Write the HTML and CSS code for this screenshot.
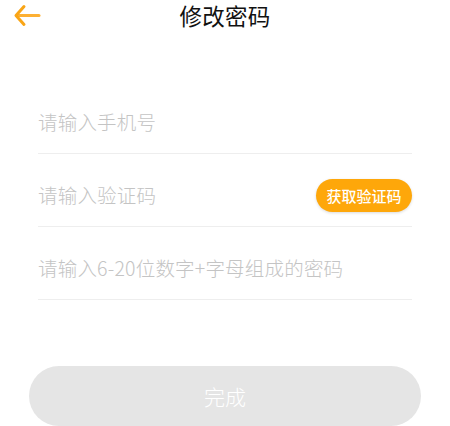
FILE: index.html
```html
<!DOCTYPE html>
<html lang="zh-CN">
<head>
<meta charset="utf-8">
<title>修改密码</title>
<link rel="stylesheet" href="styles.css">
</head>
<body>
<div class="page">
  <header class="header">
    <span class="back" aria-label="返回">
      <svg width="30" height="26" viewBox="0 0 30 26" fill="none">
        <path d="M5 12.5 H27" stroke="#FDB033" stroke-width="3" stroke-linecap="round"/>
        <path d="M12 3.5 L4 12.5 L12 21.5" stroke="#F9A516" stroke-width="3" stroke-linecap="round" stroke-linejoin="round"/>
      </svg>
    </span>
    <h1 class="title">修改密码</h1>
  </header>
  <main class="form">
    <div class="row"><span class="placeholder">请输入手机号</span></div>
    <div class="row">
      <span class="placeholder">请输入验证码</span>
      <button class="code-btn">获取验证码</button>
    </div>
    <div class="row"><span class="placeholder">请输入6-20位数字+字母组成的密码</span></div>
  </main>
  <div class="submit-wrap">
    <button class="submit">完成</button>
  </div>
</div>
</body>
</html>
```
FILE: styles.css
```css
* { box-sizing: border-box; }
html, body {
  margin: 0;
  padding: 0;
  background: #ffffff;
  font-family: "Noto Sans CJK SC", "Noto Sans", sans-serif;
}
.page {
  width: 450px;
  height: 426px;
  overflow: hidden;
}
.header {
  position: relative;
  height: 30px;
  display: flex;
  align-items: center;
  justify-content: center;
}
.back {
  position: absolute;
  left: 12px;
  top: 3px;
  width: 30px;
  height: 26px;
  display: block;
}
.back svg { display: block; }
.title {
  margin: 0;
  font-size: 22.5px;
  font-weight: 400;
  color: #111111;
  line-height: 30px;
  letter-spacing: 0.3px;
}
.form {
  padding: 51px 38px 0;
}
.row {
  height: 73px;
  padding: 24px 0 14px;
  border-bottom: 1px solid #eeeeee;
  display: flex;
  align-items: center;
  justify-content: space-between;
}
.placeholder {
  font-size: 19.5px;
  font-weight: 300;
  color: #c4c4c4;
  line-height: 34px;
  letter-spacing: 0.2px;
}
.code-btn {
  height: 33px;
  width: 96px;
  padding: 0;
  border: none;
  border-radius: 17px;
  background: #FEA70A;
  color: #ffffff;
  font-family: inherit;
  font-size: 15px;
  font-weight: 500;
  line-height: 33px;
  box-shadow: 0 1px 3px rgba(0, 0, 0, 0.15);
}
.submit-wrap {
  padding: 66px 29px 0;
}
.submit {
  width: 100%;
  height: 60px;
  border: none;
  border-radius: 30px;
  background: #e5e5e5;
  color: #ffffff;
  font-family: inherit;
  font-size: 21px;
  font-weight: 300;
  padding: 0;
}
```
